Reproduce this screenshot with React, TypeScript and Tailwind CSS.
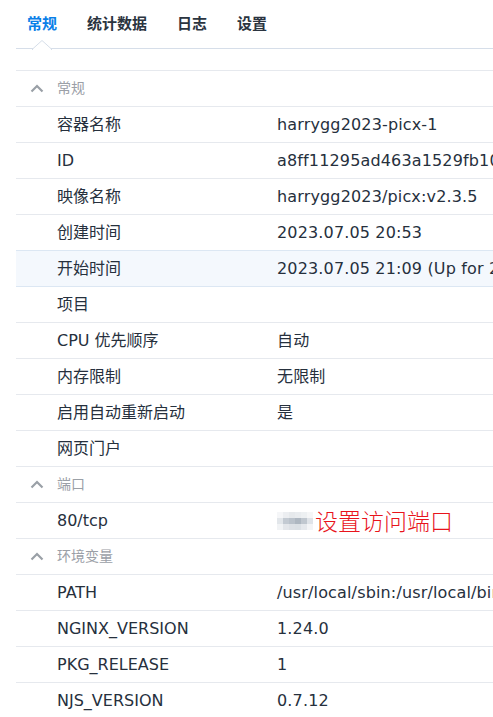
import React from "react";

type Row = { label: string; value?: string; active?: boolean; masked?: boolean };
type Section = { title: string; rows: Row[] };

const sections: Section[] = [
  {
    title: "常规",
    rows: [
      { label: "容器名称", value: "harrygg2023-picx-1" },
      { label: "ID", value: "a8ff11295ad463a1529fb10d2c9e1b7f4a06" },
      { label: "映像名称", value: "harrygg2023/picx:v2.3.5" },
      { label: "创建时间", value: "2023.07.05 20:53" },
      { label: "开始时间", value: "2023.07.05 21:09 (Up for 2 hours)", active: true },
      { label: "项目" },
      { label: "CPU 优先顺序", value: "自动" },
      { label: "内存限制", value: "无限制" },
      { label: "启用自动重新启动", value: "是" },
      { label: "网页门户" },
    ],
  },
  {
    title: "端口",
    rows: [{ label: "80/tcp", masked: true }],
  },
  {
    title: "环境变量",
    rows: [
      { label: "PATH", value: "/usr/local/sbin:/usr/local/bin:/usr/sbin:/usr/bin:/sbin:/bin" },
      { label: "NGINX_VERSION", value: "1.24.0" },
      { label: "PKG_RELEASE", value: "1" },
      { label: "NJS_VERSION", value: "0.7.12" },
    ],
  },
];

const tabs = ["常规", "统计数据", "日志", "设置"];

// pixelated mosaic that hides the port number
const mosaic = [
  ["#f5f6f8", "#eceef1", "#e6e9ec", "#e9ecef", "#edf0f2", "#f5f6f7"],
  ["#e2e6ea", "#c3cad2", "#bac2cb", "#aeb7c1", "#c0c7cf", "#dfe3e8"],
  ["#f1f3f5", "#e3e6ea", "#dde1e6", "#dbe0e5", "#e5e8ec", "#f3f4f6"],
];

function Chevron() {
  return (
    <svg width="14" height="9" viewBox="0 0 14 9" fill="none">
      <path d="M1.5 7.5 L7 2 L12.5 7.5" stroke="#9aa0a7" strokeWidth="2.2" />
    </svg>
  );
}

export default function App() {
  return (
    <div
      className="min-h-screen overflow-hidden bg-white pl-4 text-[#26303d]"
      style={{ fontFamily: '"DejaVu Sans", "Noto Sans CJK SC", sans-serif' }}
    >
      {/* Tabs */}
      <div className="relative flex h-[49px] items-center gap-[30px] whitespace-nowrap border-b border-[#d6dee9] pl-[11px] text-[15px] font-bold">
        {tabs.map((t, i) => (
          <span key={t} className={i === 0 ? "text-[#0a7fe8]" : "text-[#2b3440]"}>
            {t}
          </span>
        ))}
        <svg className="absolute left-[16px] top-[40px]" width="20" height="10" viewBox="0 0 20 10">
          <path d="M0 9.5 L10 0.5 L20 9.5" fill="white" stroke="#d6dee9" strokeWidth="1" />
          <rect x="0" y="9" width="20" height="2" fill="white" />
          <path d="M0 9.5 L1 9.5 M19 9.5 L20 9.5" stroke="#d6dee9" strokeWidth="1" />
        </svg>
      </div>

      <div className="mt-[21px] border-t border-[#e6e9ee] whitespace-nowrap">
        {sections.map((s) => (
          <div key={s.title}>
            <div className="flex h-9 items-center gap-[13px] border-b border-[#e6e9ee] pl-[14px] text-[14px] text-[#9ba0a7]">
              <Chevron />
              <span>{s.title}</span>
            </div>
            {s.rows.map((r) => (
              <div
                key={r.label}
                className={
                  r.active
                    ? "-mt-px flex h-[37px] items-center border-y border-[#dce7f3] bg-[#f4f8fd] text-[16px]"
                    : "flex h-9 items-center border-b border-[#e6e9ee] text-[16px]"
                }
              >
                <div className="w-[261px] shrink-0 pl-[41px]">{r.label}</div>
                {r.masked ? (
                  <div className="flex items-center">
                    <div className="grid grid-cols-6">
                      {mosaic.flat().map((c, i) => (
                        <div key={i} className="h-[6px] w-[6px]" style={{ background: c }} />
                      ))}
                    </div>
                    <span
                      className="ml-[2px] text-[23px] leading-none text-[#e8141c]"
                      style={{ fontFamily: '"Noto Sans CJK SC", sans-serif', fontWeight: 300 }}
                    >
                      设置访问端口
                    </span>
                  </div>
                ) : (
                  <div className="tracking-[0.15px]">{r.value}</div>
                )}
              </div>
            ))}
          </div>
        ))}
      </div>
    </div>
  );
}
